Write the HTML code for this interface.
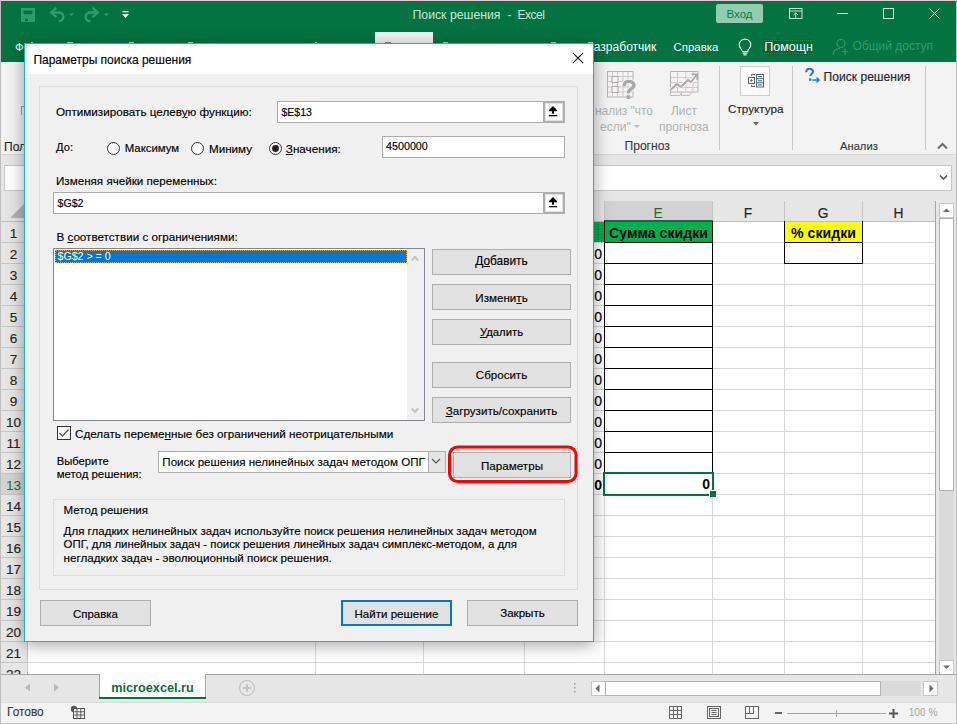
<!DOCTYPE html>
<html><head><meta charset="utf-8"><title>Поиск решения - Excel</title>
<style>
html,body{margin:0;padding:0;}
body{width:957px;height:724px;overflow:hidden;position:relative;font-family:'Liberation Sans', sans-serif;background:#fff;}
div,svg{box-sizing:border-box;}
.k{-webkit-text-stroke:0.15px currentColor;}
u{text-decoration:underline;text-underline-offset:1px;text-decoration-thickness:1px;}
</style></head><body>
<div style="position:absolute;left:0px;top:0px;width:957px;height:62px;background:#027341;"></div>
<div style="position:absolute;left:0px;top:0px;width:957px;height:1px;background:#d5cfd2;"></div>
<div style="position:absolute;left:0px;top:0px;width:1px;height:724px;background:#bdbdbd;"></div>
<div style="position:absolute;left:956px;top:0px;width:1px;height:724px;background:#bdbdbd;"></div>
<svg style="position:absolute;left:20px;top:7px;" width="16" height="16" viewBox="0 0 16 16"><rect x="2.3" y="2.3" width="11.4" height="11.4" fill="none" stroke="#2b9f6b" stroke-width="2.6"/><rect x="2" y="7.3" width="12" height="3" fill="#2b9f6b"/><rect x="3.5" y="10" width="9" height="4" fill="#2b9f6b"/><rect x="5" y="11.7" width="3" height="2.4" fill="#027341"/></svg>
<svg style="position:absolute;left:48px;top:6px;" width="30" height="17" viewBox="0 0 30 17"><path d="M8.5 1.8 L3.2 6.5 L8.5 11.2 M3.5 6.5 H10.5 C13.6 6.5 15.3 8.5 15.3 11 C15.3 13.3 13.6 15 10.5 15.3" fill="none" stroke="#2b9f6b" stroke-width="2.3"/><path d="M21 7.2 h5 l-2.5 2.8z" fill="#2b9f6b"/></svg>
<svg style="position:absolute;left:83px;top:6px;" width="30" height="17" viewBox="0 0 30 17"><path d="M9.5 1.8 L14.8 6.5 L9.5 11.2 M14.5 6.5 H7.5 C4.4 6.5 2.7 8.5 2.7 11 C2.7 13.3 4.4 15 7.5 15.3" fill="none" stroke="#2b9f6b" stroke-width="2.3"/><path d="M21 7.2 h5 l-2.5 2.8z" fill="#2b9f6b"/></svg>
<svg style="position:absolute;left:122px;top:11px;" width="8" height="9" viewBox="0 0 8 9"><rect x="0.5" y="0" width="6" height="1.3" fill="#fff"/><path d="M0 3 h7 l-3.5 4z" fill="#fff"/></svg>
<div style="position:absolute;left:412.5px;top:8.61px;font-size:12.27px;line-height:12.27px;color:#cfe6d8;font-weight:400;white-space:pre;">Поиск решения</div>
<div style="position:absolute;left:507.5px;top:8.84px;font-size:12px;line-height:12px;color:#cfe6d8;font-weight:400;white-space:pre;">-</div>
<div style="position:absolute;left:517.5px;top:8.84px;font-size:12px;line-height:12px;color:#cfe6d8;font-weight:400;white-space:pre;letter-spacing:-0.5px;">Excel</div>
<div style="position:absolute;left:716px;top:4px;width:47px;height:19px;background:#92cdb0;border-radius:2px;"></div>
<div style="position:absolute;left:716px;top:9.27px;width:47px;text-align:center;font-size:11.49px;line-height:11.49px;color:#0a7a40;font-weight:400;white-space:pre;">Вход</div>
<svg style="position:absolute;left:788px;top:7px;" width="15" height="12" viewBox="0 0 15 12"><rect x="1.5" y="1.5" width="12.5" height="10" fill="none" stroke="#c8e4d4" stroke-width="1"/><line x1="1.5" y1="4" x2="14" y2="4" stroke="#c8e4d4"/><path d="M5.5 8 L7.75 5.8 L10 8 M7.75 6 V11.5" stroke="#c8e4d4" fill="none"/></svg>
<div style="position:absolute;left:837px;top:13px;width:11px;height:1px;background:#d3e8db;"></div>
<div style="position:absolute;left:883px;top:8px;width:11px;height:11px;border:1px solid #d3e8db;"></div>
<svg style="position:absolute;left:929px;top:8px;" width="11" height="11" viewBox="0 0 11 11"><path d="M0.5 0.5 L10.5 10.5 M10.5 0.5 L0.5 10.5" stroke="#d3e8db" stroke-width="1"/></svg>
<div style="position:absolute;left:15px;top:41.67px;font-size:11.38px;line-height:11.38px;color:#fff;font-weight:400;white-space:pre;">Файл</div>
<div style="position:absolute;left:375px;top:32px;width:58px;height:30px;background:#f3f3f3;"></div>
<div style="position:absolute;left:31px;top:42px;width:2px;height:1px;background:#9cc7ae;"></div>
<div style="position:absolute;left:67px;top:42px;width:6px;height:1px;background:#b9d9c6;"></div>
<div style="position:absolute;left:129px;top:42px;width:5px;height:1px;background:#b9d9c6;"></div>
<div style="position:absolute;left:188px;top:42px;width:5px;height:1px;background:#b9d9c6;"></div>
<div style="position:absolute;left:315px;top:42px;width:2px;height:1px;background:#9cc7ae;"></div>
<div style="position:absolute;left:385px;top:42px;width:6px;height:1px;background:#8a8a8a;"></div>
<div style="position:absolute;left:443px;top:42px;width:5px;height:1px;background:#b9d9c6;"></div>
<div style="position:absolute;left:551px;top:42px;width:5px;height:1px;background:#b9d9c6;"></div>
<div style="position:absolute;left:588px;top:42px;width:5px;height:1px;background:#b9d9c6;"></div>
<div style="position:absolute;left:593.8px;top:41.11px;font-size:12.04px;line-height:12.04px;color:#fff;font-weight:400;white-space:pre;">азработчик</div>
<div style="position:absolute;left:673.5px;top:41.62px;font-size:11.44px;line-height:11.44px;color:#fff;font-weight:400;white-space:pre;">Справка</div>
<svg style="position:absolute;left:738px;top:38px;" width="14" height="18" viewBox="0 0 14 18"><path d="M7 1.2 C3.5 1.2 1.2 3.8 1.2 6.6 C1.2 9 2.6 10.3 3.6 11.6 C4.2 12.4 4.3 13 4.3 13.6 H9.7 C9.7 13 9.8 12.4 10.4 11.6 C11.4 10.3 12.8 9 12.8 6.6 C12.8 3.8 10.5 1.2 7 1.2 Z" fill="none" stroke="#fff" stroke-width="1.2"/><line x1="4.6" y1="15.2" x2="9.4" y2="15.2" stroke="#fff" stroke-width="1.1"/><line x1="5.4" y1="16.9" x2="8.6" y2="16.9" stroke="#fff" stroke-width="1.1"/></svg>
<div style="position:absolute;left:763px;top:39px;width:50px;height:16px;background:#066838;"></div>
<div style="position:absolute;left:764px;top:40px;width:49px;height:1px;background:repeating-linear-gradient(90deg,#1f9a45 0 1px,transparent 1px 2px);opacity:.8;"></div>
<div style="position:absolute;left:764px;top:53px;width:49px;height:1px;background:repeating-linear-gradient(90deg,#1f9a45 0 1px,transparent 1px 2px);opacity:.8;"></div>
<div style="position:absolute;left:764.3px;top:40.72px;font-size:12.5px;line-height:12.5px;color:#fff;font-weight:400;white-space:pre;">Помощн</div>
<svg style="position:absolute;left:832px;top:38px;" width="18" height="18" viewBox="0 0 18 18"><circle cx="9" cy="5.5" r="4" fill="none" stroke="#2e9f6e" stroke-width="1.1"/><path d="M1 17 C1.5 12.5 4.5 10.5 8 10.5" fill="none" stroke="#2e9f6e" stroke-width="1.1"/><path d="M13 10.5 V17 M9.8 13.7 H16.2" stroke="#2e9f6e" stroke-width="1.1"/></svg>
<div style="position:absolute;left:852.6px;top:40.87px;font-size:11.97px;line-height:11.97px;color:#2e9f6e;font-weight:400;white-space:pre;">Общий доступ</div>
<div style="position:absolute;left:1px;top:62px;width:955px;height:92px;background:#f3f3f3;"></div>
<div style="position:absolute;left:1px;top:154px;width:955px;height:1px;background:#d6d6d6;"></div>
<div class="k" style="position:absolute;left:4px;top:140.84px;font-size:12px;line-height:12px;color:#262626;font-weight:400;white-space:pre;">Пол</div>
<div style="position:absolute;left:21px;top:106px;width:1px;height:9px;background:#a0a0a0;"></div>
<div style="position:absolute;left:21px;top:106px;width:3px;height:1px;background:#a0a0a0;"></div>
<svg style="position:absolute;left:606px;top:70px;" width="32" height="31" viewBox="0 0 32 31"><rect x="1.5" y="1.5" width="25.5" height="25.5" fill="#f8f2f5" stroke="#b4b4b4"/>
<g stroke="#cbcbcb" stroke-width="1"><line x1="6.5" y1="1.5" x2="6.5" y2="27"/><line x1="11.5" y1="1.5" x2="11.5" y2="27"/><line x1="17" y1="1.5" x2="17" y2="27"/><line x1="22" y1="1.5" x2="22" y2="27"/>
<line x1="1.5" y1="6.5" x2="27" y2="6.5"/><line x1="1.5" y1="11.5" x2="27" y2="11.5"/><line x1="1.5" y1="17" x2="27" y2="17"/><line x1="1.5" y1="22" x2="27" y2="22"/></g>
<rect x="6" y="6.5" width="6" height="6" fill="#f8f2f5" stroke="#a8a8a8"/><rect x="6" y="16.5" width="6" height="6" fill="#f8f2f5" stroke="#a8a8a8"/>
<path d="M18 16.2 C18 12.6 20.4 11.4 23 11.4 C25.9 11.4 28 13.2 28 15.6 C28 18.6 22.3 18.8 22.3 23.2" fill="none" stroke="#f3f3f3" stroke-width="5.5"/>
<path d="M18 16.2 C18 12.6 20.4 11.4 23 11.4 C25.9 11.4 28 13.2 28 15.6 C28 18.6 22.3 18.8 22.3 23.2" fill="none" stroke="#a8a8a8" stroke-width="3.4"/>
<rect x="20.6" y="25.4" width="3.6" height="3.6" fill="#a8a8a8"/></svg>
<div style="position:absolute;left:595px;top:105.91px;font-size:11.92px;line-height:11.92px;color:#b1b1b1;font-weight:400;white-space:pre;">нализ "что</div>
<div style="position:absolute;left:600px;top:120.84px;font-size:12px;line-height:12px;color:#b1b1b1;font-weight:400;white-space:pre;">если"</div>
<svg style="position:absolute;left:634px;top:125px;" width="7" height="4" viewBox="0 0 7 4"><path d="M0 0 h6 l-3 3z" fill="#b9b9b9"/></svg>
<svg style="position:absolute;left:669px;top:70px;" width="31" height="27" viewBox="0 0 31 27"><rect x="1.5" y="1.5" width="27.5" height="20.5" fill="#f8f2f5" stroke="#b4b4b4"/>
<g stroke="#cbcbcb" stroke-width="1"><line x1="8.5" y1="1.5" x2="8.5" y2="22"/><line x1="16.8" y1="1.5" x2="16.8" y2="22"/><line x1="24" y1="1.5" x2="24" y2="22"/>
<line x1="1.5" y1="7.5" x2="29" y2="7.5"/><line x1="1.5" y1="12.5" x2="29" y2="12.5"/><line x1="1.5" y1="17.5" x2="29" y2="17.5"/></g>
<path d="M1.5 22 V25.5 H11 L12.5 22.5 M12.5 22.5 V25.5 H20.5 L23 22" fill="none" stroke="#bdbdbd"/>
<path d="M2 19.5 L8 14 L12 17 L19 10 L22 12 L27.5 5" fill="none" stroke="#f8f2f5" stroke-width="4"/>
<path d="M2 19.5 L8 14 L12 17 L19 10 L22 12 L27.5 5" fill="none" stroke="#a8a8a8" stroke-width="1.8"/>
<path d="M22.5 4.2 H28.2 V9.8" fill="none" stroke="#a8a8a8" stroke-width="1.6"/></svg>
<div style="position:absolute;left:671px;top:105.88px;font-size:11.96px;line-height:11.96px;color:#b1b1b1;font-weight:400;white-space:pre;">Лист</div>
<div style="position:absolute;left:659px;top:120.8px;font-size:12.05px;line-height:12.05px;color:#b1b1b1;font-weight:400;white-space:pre;">прогноза</div>
<div class="k" style="position:absolute;left:624.5px;top:139.78px;font-size:12.07px;line-height:12.07px;color:#3b3b3b;font-weight:400;white-space:pre;">Прогноз</div>
<div style="position:absolute;left:719px;top:66px;width:1px;height:84px;background:#c8c8c8;"></div>
<div style="position:absolute;left:792px;top:66px;width:1px;height:84px;background:#c8c8c8;"></div>
<div style="position:absolute;left:925px;top:66px;width:1px;height:84px;background:#c8c8c8;"></div>
<div style="position:absolute;left:740px;top:66px;width:30px;height:30px;background:#fbfbfb;border:1px solid #cdcdcd;"></div>
<svg style="position:absolute;left:747px;top:73px;" width="18" height="15" viewBox="0 0 18 15"><g fill="none" stroke="#666" stroke-width="1">
<rect x="1.5" y="4.5" width="6" height="6"/><path d="M3.2 7.5 H5.8 M4.5 6.2 V8.8"/>
<path d="M8 1.5 H4.5 V3.2 M4.5 11.8 V13.5 H8"/>
<rect x="9.5" y="1.5" width="7" height="12.5"/><line x1="9.5" y1="5.7" x2="16.5" y2="5.7"/><line x1="9.5" y1="9.8" x2="16.5" y2="9.8"/>
</g>
<g stroke="#1e88d0" stroke-width="1.2"><line x1="11" y1="3.6" x2="15" y2="3.6"/><line x1="11" y1="7.75" x2="15" y2="7.75"/><line x1="11" y1="11.9" x2="15" y2="11.9"/></g></svg>
<div class="k" style="position:absolute;left:728px;top:103.11px;font-size:11.68px;line-height:11.68px;color:#262626;font-weight:400;white-space:pre;">Структура</div>
<svg style="position:absolute;left:753px;top:122px;" width="7" height="4" viewBox="0 0 7 4"><path d="M0 0 h6 l-3 3.5z" fill="#666"/></svg>
<svg style="position:absolute;left:804px;top:68px;" width="17" height="15" viewBox="0 0 17 15"><path d="M2.2 4.2 C2.2 1.6 4 0.8 5.6 0.8 C7.4 0.8 9 1.8 9 3.6 C9 5.6 6.6 6 6.3 8.2" fill="none" stroke="#1e7cc8" stroke-width="2"/>
<rect x="5" y="10.4" width="2.4" height="2.4" fill="#1e7cc8"/>
<path d="M8.5 12 H15 M12.5 9.5 L15.2 12 L12.5 14.5" fill="none" stroke="#1e7cc8" stroke-width="1.3"/></svg>
<div class="k" style="position:absolute;left:823.6px;top:70.77px;font-size:12.09px;line-height:12.09px;color:#262626;font-weight:400;white-space:pre;">Поиск решения</div>
<div class="k" style="position:absolute;left:840px;top:140.52px;font-size:11.2px;line-height:11.2px;color:#3b3b3b;font-weight:400;white-space:pre;">Анализ</div>
<svg style="position:absolute;left:937px;top:142px;" width="11" height="8" viewBox="0 0 11 8"><path d="M1 6.5 L5.5 2 L10 6.5" fill="none" stroke="#6b6b6b" stroke-width="2"/></svg>
<div style="position:absolute;left:1px;top:155px;width:955px;height:46px;background:#e6e6e6;"></div>
<div style="position:absolute;left:4px;top:165px;width:120px;height:26px;background:#fff;border:1px solid #c6c6c6;"></div>
<div style="position:absolute;left:560px;top:165px;width:392px;height:26px;background:#fff;border:1px solid #c6c6c6;"></div>
<svg style="position:absolute;left:939px;top:174px;" width="9" height="7" viewBox="0 0 9 7"><path d="M1 1.5 L4.5 5 L8 1.5" fill="none" stroke="#555" stroke-width="1.6"/></svg>
<div style="position:absolute;left:1px;top:201px;width:935px;height:20px;background:#e6e6e6;"></div>
<svg style="position:absolute;left:10px;top:204px;" width="15" height="15" viewBox="0 0 15 15"><path d="M14 0 V14 H0 Z" fill="#b4b4b4"/></svg>
<div style="position:absolute;left:1px;top:221px;width:27px;height:453px;background:#e6e6e6;"></div>
<div style="position:absolute;left:27px;top:201px;width:1px;height:473px;background:#c6c6c6;"></div>
<div style="position:absolute;left:1px;top:221px;width:935px;height:1px;background:#bdbdbd;"></div>
<div style="position:absolute;left:28px;top:222px;width:907px;height:452px;background:#fff;"></div>
<div style="position:absolute;left:28px;top:242px;width:907px;height:1px;background:#d9d9d9;"></div>
<div style="position:absolute;left:1px;top:242px;width:27px;height:1px;background:#c6c6c6;"></div>
<div style="position:absolute;left:28px;top:263px;width:907px;height:1px;background:#d9d9d9;"></div>
<div style="position:absolute;left:1px;top:263px;width:27px;height:1px;background:#c6c6c6;"></div>
<div style="position:absolute;left:28px;top:284px;width:907px;height:1px;background:#d9d9d9;"></div>
<div style="position:absolute;left:1px;top:284px;width:27px;height:1px;background:#c6c6c6;"></div>
<div style="position:absolute;left:28px;top:305px;width:907px;height:1px;background:#d9d9d9;"></div>
<div style="position:absolute;left:1px;top:305px;width:27px;height:1px;background:#c6c6c6;"></div>
<div style="position:absolute;left:28px;top:326px;width:907px;height:1px;background:#d9d9d9;"></div>
<div style="position:absolute;left:1px;top:326px;width:27px;height:1px;background:#c6c6c6;"></div>
<div style="position:absolute;left:28px;top:347px;width:907px;height:1px;background:#d9d9d9;"></div>
<div style="position:absolute;left:1px;top:347px;width:27px;height:1px;background:#c6c6c6;"></div>
<div style="position:absolute;left:28px;top:368px;width:907px;height:1px;background:#d9d9d9;"></div>
<div style="position:absolute;left:1px;top:368px;width:27px;height:1px;background:#c6c6c6;"></div>
<div style="position:absolute;left:28px;top:389px;width:907px;height:1px;background:#d9d9d9;"></div>
<div style="position:absolute;left:1px;top:389px;width:27px;height:1px;background:#c6c6c6;"></div>
<div style="position:absolute;left:28px;top:410px;width:907px;height:1px;background:#d9d9d9;"></div>
<div style="position:absolute;left:1px;top:410px;width:27px;height:1px;background:#c6c6c6;"></div>
<div style="position:absolute;left:28px;top:431px;width:907px;height:1px;background:#d9d9d9;"></div>
<div style="position:absolute;left:1px;top:431px;width:27px;height:1px;background:#c6c6c6;"></div>
<div style="position:absolute;left:28px;top:452px;width:907px;height:1px;background:#d9d9d9;"></div>
<div style="position:absolute;left:1px;top:452px;width:27px;height:1px;background:#c6c6c6;"></div>
<div style="position:absolute;left:28px;top:473px;width:907px;height:1px;background:#d9d9d9;"></div>
<div style="position:absolute;left:1px;top:473px;width:27px;height:1px;background:#c6c6c6;"></div>
<div style="position:absolute;left:28px;top:494px;width:907px;height:1px;background:#d9d9d9;"></div>
<div style="position:absolute;left:1px;top:494px;width:27px;height:1px;background:#c6c6c6;"></div>
<div style="position:absolute;left:28px;top:515px;width:907px;height:1px;background:#d9d9d9;"></div>
<div style="position:absolute;left:1px;top:515px;width:27px;height:1px;background:#c6c6c6;"></div>
<div style="position:absolute;left:28px;top:536px;width:907px;height:1px;background:#d9d9d9;"></div>
<div style="position:absolute;left:1px;top:536px;width:27px;height:1px;background:#c6c6c6;"></div>
<div style="position:absolute;left:28px;top:557px;width:907px;height:1px;background:#d9d9d9;"></div>
<div style="position:absolute;left:1px;top:557px;width:27px;height:1px;background:#c6c6c6;"></div>
<div style="position:absolute;left:28px;top:578px;width:907px;height:1px;background:#d9d9d9;"></div>
<div style="position:absolute;left:1px;top:578px;width:27px;height:1px;background:#c6c6c6;"></div>
<div style="position:absolute;left:28px;top:599px;width:907px;height:1px;background:#d9d9d9;"></div>
<div style="position:absolute;left:1px;top:599px;width:27px;height:1px;background:#c6c6c6;"></div>
<div style="position:absolute;left:28px;top:620px;width:907px;height:1px;background:#d9d9d9;"></div>
<div style="position:absolute;left:1px;top:620px;width:27px;height:1px;background:#c6c6c6;"></div>
<div style="position:absolute;left:28px;top:641px;width:907px;height:1px;background:#d9d9d9;"></div>
<div style="position:absolute;left:1px;top:641px;width:27px;height:1px;background:#c6c6c6;"></div>
<div style="position:absolute;left:28px;top:662px;width:907px;height:1px;background:#d9d9d9;"></div>
<div style="position:absolute;left:1px;top:662px;width:27px;height:1px;background:#c6c6c6;"></div>
<div style="position:absolute;left:315px;top:222px;width:1px;height:452px;background:#d9d9d9;"></div>
<div style="position:absolute;left:315px;top:201px;width:1px;height:20px;background:#c6c6c6;"></div>
<div style="position:absolute;left:423px;top:222px;width:1px;height:452px;background:#d9d9d9;"></div>
<div style="position:absolute;left:423px;top:201px;width:1px;height:20px;background:#c6c6c6;"></div>
<div style="position:absolute;left:524px;top:222px;width:1px;height:452px;background:#d9d9d9;"></div>
<div style="position:absolute;left:524px;top:201px;width:1px;height:20px;background:#c6c6c6;"></div>
<div style="position:absolute;left:604px;top:222px;width:1px;height:452px;background:#d9d9d9;"></div>
<div style="position:absolute;left:604px;top:201px;width:1px;height:20px;background:#c6c6c6;"></div>
<div style="position:absolute;left:712px;top:222px;width:1px;height:452px;background:#d9d9d9;"></div>
<div style="position:absolute;left:712px;top:201px;width:1px;height:20px;background:#c6c6c6;"></div>
<div style="position:absolute;left:784px;top:222px;width:1px;height:452px;background:#d9d9d9;"></div>
<div style="position:absolute;left:784px;top:201px;width:1px;height:20px;background:#c6c6c6;"></div>
<div style="position:absolute;left:862px;top:222px;width:1px;height:452px;background:#d9d9d9;"></div>
<div style="position:absolute;left:862px;top:201px;width:1px;height:20px;background:#c6c6c6;"></div>
<div class="k" style="position:absolute;left:0px;top:227.19px;width:27px;text-align:center;font-size:13.6px;line-height:13.6px;color:#262626;font-weight:400;white-space:pre;">1</div>
<div class="k" style="position:absolute;left:0px;top:248.19px;width:27px;text-align:center;font-size:13.6px;line-height:13.6px;color:#262626;font-weight:400;white-space:pre;">2</div>
<div class="k" style="position:absolute;left:0px;top:269.19px;width:27px;text-align:center;font-size:13.6px;line-height:13.6px;color:#262626;font-weight:400;white-space:pre;">3</div>
<div class="k" style="position:absolute;left:0px;top:290.19px;width:27px;text-align:center;font-size:13.6px;line-height:13.6px;color:#262626;font-weight:400;white-space:pre;">4</div>
<div class="k" style="position:absolute;left:0px;top:311.19px;width:27px;text-align:center;font-size:13.6px;line-height:13.6px;color:#262626;font-weight:400;white-space:pre;">5</div>
<div class="k" style="position:absolute;left:0px;top:332.19px;width:27px;text-align:center;font-size:13.6px;line-height:13.6px;color:#262626;font-weight:400;white-space:pre;">6</div>
<div class="k" style="position:absolute;left:0px;top:353.19px;width:27px;text-align:center;font-size:13.6px;line-height:13.6px;color:#262626;font-weight:400;white-space:pre;">7</div>
<div class="k" style="position:absolute;left:0px;top:374.19px;width:27px;text-align:center;font-size:13.6px;line-height:13.6px;color:#262626;font-weight:400;white-space:pre;">8</div>
<div class="k" style="position:absolute;left:0px;top:395.19px;width:27px;text-align:center;font-size:13.6px;line-height:13.6px;color:#262626;font-weight:400;white-space:pre;">9</div>
<div class="k" style="position:absolute;left:0px;top:416.19px;width:27px;text-align:center;font-size:13.6px;line-height:13.6px;color:#262626;font-weight:400;white-space:pre;">10</div>
<div class="k" style="position:absolute;left:0px;top:437.19px;width:27px;text-align:center;font-size:13.6px;line-height:13.6px;color:#262626;font-weight:400;white-space:pre;">11</div>
<div class="k" style="position:absolute;left:0px;top:458.19px;width:27px;text-align:center;font-size:13.6px;line-height:13.6px;color:#262626;font-weight:400;white-space:pre;">12</div>
<div style="position:absolute;left:1px;top:474px;width:26px;height:20px;background:#d3d3d3;"></div>
<div style="position:absolute;left:0px;top:479.19px;width:27px;text-align:center;font-size:13.6px;line-height:13.6px;color:#1e6b41;font-weight:400;white-space:pre;">13</div>
<div class="k" style="position:absolute;left:0px;top:500.19px;width:27px;text-align:center;font-size:13.6px;line-height:13.6px;color:#262626;font-weight:400;white-space:pre;">14</div>
<div class="k" style="position:absolute;left:0px;top:521.19px;width:27px;text-align:center;font-size:13.6px;line-height:13.6px;color:#262626;font-weight:400;white-space:pre;">15</div>
<div class="k" style="position:absolute;left:0px;top:542.19px;width:27px;text-align:center;font-size:13.6px;line-height:13.6px;color:#262626;font-weight:400;white-space:pre;">16</div>
<div class="k" style="position:absolute;left:0px;top:563.19px;width:27px;text-align:center;font-size:13.6px;line-height:13.6px;color:#262626;font-weight:400;white-space:pre;">17</div>
<div class="k" style="position:absolute;left:0px;top:584.19px;width:27px;text-align:center;font-size:13.6px;line-height:13.6px;color:#262626;font-weight:400;white-space:pre;">18</div>
<div class="k" style="position:absolute;left:0px;top:605.19px;width:27px;text-align:center;font-size:13.6px;line-height:13.6px;color:#262626;font-weight:400;white-space:pre;">19</div>
<div class="k" style="position:absolute;left:0px;top:626.19px;width:27px;text-align:center;font-size:13.6px;line-height:13.6px;color:#262626;font-weight:400;white-space:pre;">20</div>
<div class="k" style="position:absolute;left:0px;top:647.19px;width:27px;text-align:center;font-size:13.6px;line-height:13.6px;color:#262626;font-weight:400;white-space:pre;">21</div>
<div class="k" style="position:absolute;left:0px;top:668.19px;width:27px;text-align:center;font-size:13.6px;line-height:13.6px;color:#262626;font-weight:400;white-space:pre;">22</div>
<div class="k" style="position:absolute;left:524px;top:206.62px;width:80px;text-align:center;font-size:13.8px;line-height:13.8px;color:#262626;font-weight:400;white-space:pre;">D</div>
<div style="position:absolute;left:605px;top:201px;width:107px;height:20px;background:#d2d2d2;"></div>
<div style="position:absolute;left:604px;top:220px;width:109px;height:2px;background:#027341;"></div>
<div style="position:absolute;left:604px;top:206.62px;width:108px;text-align:center;font-size:13.8px;line-height:13.8px;color:#1e6b41;font-weight:400;white-space:pre;">E</div>
<div class="k" style="position:absolute;left:712px;top:206.62px;width:72px;text-align:center;font-size:13.8px;line-height:13.8px;color:#262626;font-weight:400;white-space:pre;">F</div>
<div class="k" style="position:absolute;left:784px;top:206.62px;width:78px;text-align:center;font-size:13.8px;line-height:13.8px;color:#262626;font-weight:400;white-space:pre;">G</div>
<div class="k" style="position:absolute;left:862px;top:206.62px;width:73px;text-align:center;font-size:13.8px;line-height:13.8px;color:#262626;font-weight:400;white-space:pre;">H</div>
<div style="position:absolute;left:524px;top:222px;width:81px;height:20px;background:#00b050;"></div>
<div style="position:absolute;left:605px;top:222px;width:107px;height:20px;background:#00b050;"></div>
<div style="position:absolute;left:605px;top:226.01px;width:107px;text-align:center;font-size:14.17px;line-height:14.17px;color:#000;font-weight:700;white-space:pre;">Сумма скидки</div>
<svg style="position:absolute;left:594px;top:222px;" width="10" height="20" viewBox="0 0 10 20"><rect x="3" y="2.0" width="2" height="1" fill="#1f7a44"/><rect x="3" y="4.5" width="2" height="1" fill="#1f7a44"/><rect x="3" y="7.0" width="2" height="1" fill="#1f7a44"/><rect x="3" y="9.5" width="2" height="1" fill="#1f7a44"/><rect x="3" y="12.0" width="2" height="1" fill="#1f7a44"/><rect x="3" y="14.5" width="2" height="1" fill="#1f7a44"/><rect x="3" y="17.0" width="2" height="1" fill="#1f7a44"/><rect x="7" y="3" width="1.5" height="1" fill="#1f7a44"/><rect x="7" y="6" width="1.5" height="1" fill="#1f7a44"/><rect x="7" y="9" width="1.5" height="1" fill="#1f7a44"/><rect x="7" y="12" width="1.5" height="1" fill="#1f7a44"/><rect x="7" y="15" width="1.5" height="1" fill="#1f7a44"/><rect x="7" y="18" width="1.5" height="1" fill="#1f7a44"/></svg>
<div style="position:absolute;left:784px;top:222px;width:78px;height:20px;background:#ffff00;"></div>
<div style="position:absolute;left:784px;top:226.01px;width:79px;text-align:center;font-size:14.16px;line-height:14.16px;color:#000;font-weight:700;white-space:pre;">% скидки</div>
<div style="position:absolute;left:604px;top:221px;width:1px;height:252px;background:#000;"></div>
<div style="position:absolute;left:712px;top:221px;width:1px;height:252px;background:#000;"></div>
<div style="position:absolute;left:604px;top:242px;width:109px;height:1px;background:#000;"></div>
<div style="position:absolute;left:604px;top:263px;width:109px;height:1px;background:#000;"></div>
<div style="position:absolute;left:604px;top:284px;width:109px;height:1px;background:#000;"></div>
<div style="position:absolute;left:604px;top:305px;width:109px;height:1px;background:#000;"></div>
<div style="position:absolute;left:604px;top:326px;width:109px;height:1px;background:#000;"></div>
<div style="position:absolute;left:604px;top:347px;width:109px;height:1px;background:#000;"></div>
<div style="position:absolute;left:604px;top:368px;width:109px;height:1px;background:#000;"></div>
<div style="position:absolute;left:604px;top:389px;width:109px;height:1px;background:#000;"></div>
<div style="position:absolute;left:604px;top:410px;width:109px;height:1px;background:#000;"></div>
<div style="position:absolute;left:604px;top:431px;width:109px;height:1px;background:#000;"></div>
<div style="position:absolute;left:604px;top:452px;width:109px;height:1px;background:#000;"></div>
<div style="position:absolute;left:604px;top:473px;width:109px;height:1px;background:#000;"></div>
<div style="position:absolute;left:784px;top:221px;width:1px;height:43px;background:#000;"></div>
<div style="position:absolute;left:862px;top:221px;width:1px;height:43px;background:#000;"></div>
<div style="position:absolute;left:784px;top:242px;width:79px;height:1px;background:#000;"></div>
<div style="position:absolute;left:784px;top:263px;width:79px;height:1px;background:#000;"></div>
<div class="k" style="position:absolute;left:562px;top:247.45px;width:40px;text-align:right;font-size:14px;line-height:14px;color:#000;font-weight:400;white-space:pre;">0</div>
<div class="k" style="position:absolute;left:562px;top:268.45px;width:40px;text-align:right;font-size:14px;line-height:14px;color:#000;font-weight:400;white-space:pre;">0</div>
<div class="k" style="position:absolute;left:562px;top:289.45px;width:40px;text-align:right;font-size:14px;line-height:14px;color:#000;font-weight:400;white-space:pre;">0</div>
<div class="k" style="position:absolute;left:562px;top:310.45px;width:40px;text-align:right;font-size:14px;line-height:14px;color:#000;font-weight:400;white-space:pre;">0</div>
<div class="k" style="position:absolute;left:562px;top:331.45px;width:40px;text-align:right;font-size:14px;line-height:14px;color:#000;font-weight:400;white-space:pre;">0</div>
<div class="k" style="position:absolute;left:562px;top:352.45px;width:40px;text-align:right;font-size:14px;line-height:14px;color:#000;font-weight:400;white-space:pre;">0</div>
<div class="k" style="position:absolute;left:562px;top:373.45px;width:40px;text-align:right;font-size:14px;line-height:14px;color:#000;font-weight:400;white-space:pre;">0</div>
<div class="k" style="position:absolute;left:562px;top:394.45px;width:40px;text-align:right;font-size:14px;line-height:14px;color:#000;font-weight:400;white-space:pre;">0</div>
<div class="k" style="position:absolute;left:562px;top:415.45px;width:40px;text-align:right;font-size:14px;line-height:14px;color:#000;font-weight:400;white-space:pre;">0</div>
<div class="k" style="position:absolute;left:562px;top:436.45px;width:40px;text-align:right;font-size:14px;line-height:14px;color:#000;font-weight:400;white-space:pre;">0</div>
<div class="k" style="position:absolute;left:562px;top:457.45px;width:40px;text-align:right;font-size:14px;line-height:14px;color:#000;font-weight:400;white-space:pre;">0</div>
<div style="position:absolute;left:562px;top:478.45px;width:40px;text-align:right;font-size:14px;line-height:14px;color:#000;font-weight:700;white-space:pre;">0</div>
<div style="position:absolute;left:603px;top:472px;width:111px;height:24px;border:2px solid #027341;"></div>
<div style="position:absolute;left:709px;top:490px;width:7px;height:7px;background:#027341;border-left:1px solid #fff;border-top:1px solid #fff;"></div>
<div style="position:absolute;left:670px;top:477.15px;width:40px;text-align:right;font-size:14px;line-height:14px;color:#000;font-weight:700;white-space:pre;">0</div>
<div style="position:absolute;left:935px;top:201px;width:1px;height:474px;background:#a6a6a6;"></div>
<div style="position:absolute;left:936px;top:201px;width:20px;height:474px;background:#e6e6e6;"></div>
<div style="position:absolute;left:939px;top:218px;width:15px;height:443px;background:#dadada;"></div>
<div style="position:absolute;left:939px;top:203px;width:15px;height:15px;background:#fff;border:1px solid #c6c6c6;"></div>
<svg style="position:absolute;left:943px;top:208px;" width="8" height="5" viewBox="0 0 8 5"><path d="M0 4 L3.5 0.5 L7 4z" fill="#6b6b6b"/></svg>
<div style="position:absolute;left:939px;top:218px;width:15px;height:273px;background:#fff;border:1px solid #b4b4b4;"></div>
<div style="position:absolute;left:939px;top:660px;width:15px;height:15px;background:#fff;border:1px solid #c6c6c6;"></div>
<svg style="position:absolute;left:943px;top:665px;" width="8" height="5" viewBox="0 0 8 5"><path d="M0 0.5 L7 0.5 L3.5 4z" fill="#6b6b6b"/></svg>
<div style="position:absolute;left:1px;top:674px;width:955px;height:1px;background:#a6a6a6;"></div>
<div style="position:absolute;left:1px;top:675px;width:955px;height:27px;background:#e6e6e6;"></div>
<svg style="position:absolute;left:24px;top:683px;" width="8" height="9" viewBox="0 0 8 9"><path d="M6 0.5 V8.5 L1 4.5z" fill="#b9b9b9"/></svg>
<svg style="position:absolute;left:53px;top:683px;" width="8" height="9" viewBox="0 0 8 9"><path d="M1 0.5 V8.5 L6 4.5z" fill="#b9b9b9"/></svg>
<div style="position:absolute;left:99px;top:674px;width:107px;height:25px;background:#fff;border-left:1px solid #a6a6a6;border-right:1px solid #a6a6a6;"></div>
<div style="position:absolute;left:99px;top:697px;width:107px;height:2px;background:#027341;"></div>
<div style="position:absolute;left:99px;top:682.06px;width:107px;text-align:center;font-size:12.69px;line-height:12.69px;color:#0f6e3e;font-weight:700;white-space:pre;">microexcel.ru</div>
<svg style="position:absolute;left:238px;top:679px;" width="18" height="18" viewBox="0 0 18 18"><circle cx="9" cy="9" r="7.5" fill="none" stroke="#c2c2c2" stroke-width="1.2"/><path d="M9 5 V13 M5 9 H13" stroke="#bdbdbd" stroke-width="1.5"/></svg>
<svg style="position:absolute;left:573px;top:683px;" width="4" height="11" viewBox="0 0 4 11"><rect x="1" y="0" width="1.5" height="1.5" fill="#9a9a9a"/><rect x="1" y="4" width="1.5" height="1.5" fill="#9a9a9a"/><rect x="1" y="8" width="1.5" height="1.5" fill="#9a9a9a"/></svg>
<div style="position:absolute;left:591px;top:681px;width:330px;height:15px;background:#dadada;"></div>
<div style="position:absolute;left:591px;top:681px;width:15px;height:15px;background:#fff;border:1px solid #c6c6c6;"></div>
<svg style="position:absolute;left:595px;top:684px;" width="6" height="9" viewBox="0 0 6 9"><path d="M4.5 0.5 V8.5 L0.5 4.5z" fill="#6b6b6b"/></svg>
<div style="position:absolute;left:605px;top:681px;width:276px;height:15px;background:#fff;border:1px solid #b4b4b4;"></div>
<div style="position:absolute;left:923px;top:681px;width:15px;height:15px;background:#fff;border:1px solid #c6c6c6;"></div>
<svg style="position:absolute;left:929px;top:684px;" width="6" height="9" viewBox="0 0 6 9"><path d="M0.5 0.5 V8.5 L4.5 4.5z" fill="#6b6b6b"/></svg>
<div style="position:absolute;left:1px;top:702px;width:955px;height:22px;background:#f3f3f3;border-top:1px solid #dadada;border-bottom:1px solid #c6c6c6;"></div>
<div class="k" style="position:absolute;left:7px;top:706.94px;font-size:11.88px;line-height:11.88px;color:#3b3b3b;font-weight:400;white-space:pre;">Готово</div>
<svg style="position:absolute;left:70px;top:705px;" width="15" height="14" viewBox="0 0 15 14"><circle cx="4" cy="4" r="3.2" fill="#555"/><rect x="3.5" y="3.5" width="11" height="10" fill="#fff" stroke="#555"/><path d="M3.5 6.8 H14.5 M3.5 10 H14.5 M7 3.5 V13.5 M10.8 3.5 V13.5" stroke="#555" stroke-width="1"/></svg>
<svg style="position:absolute;left:669px;top:706px;" width="13" height="13" viewBox="0 0 13 13"><rect x="0.5" y="0.5" width="12" height="12" fill="none" stroke="#666"/><path d="M4.5 0.5 V12.5 M8.5 0.5 V12.5 M0.5 4.5 H12.5 M0.5 8.5 H12.5" stroke="#666"/></svg>
<svg style="position:absolute;left:707px;top:706px;" width="14" height="13" viewBox="0 0 14 13"><rect x="0.5" y="0.5" width="13" height="12" fill="none" stroke="#666"/><rect x="2.5" y="2.5" width="9" height="8" fill="none" stroke="#666"/><path d="M4.5 4.5 H9.5 M4.5 6.5 H9.5 M4.5 8.5 H9.5" stroke="#666"/></svg>
<svg style="position:absolute;left:745px;top:706px;" width="14" height="13" viewBox="0 0 14 13"><rect x="0.5" y="0.5" width="13" height="12" fill="none" stroke="#666"/><path d="M4.5 0.5 V7.5 M8.5 0.5 V7.5 M0.5 7.5 H9" fill="none" stroke="#666"/></svg>
<div style="position:absolute;left:775px;top:712px;width:7px;height:2px;background:#666;"></div>
<div style="position:absolute;left:787px;top:713px;width:99px;height:1px;background:#a6a6a6;"></div>
<div style="position:absolute;left:836px;top:710px;width:1px;height:7px;background:#a6a6a6;"></div>
<svg style="position:absolute;left:889px;top:709px;" width="9" height="9" viewBox="0 0 9 9"><path d="M4.5 0 V9 M0 4.5 H9" stroke="#555" stroke-width="2"/></svg>
<div style="position:absolute;left:908.7px;top:708.4px;font-size:10.16px;line-height:10.16px;color:#a6a6a6;font-weight:400;white-space:pre;">100 %</div>
<div style="position:absolute;left:24px;top:43px;width:570px;height:599px;box-shadow:0 3px 16px rgba(0,0,0,0.36);background:#f0f0f0;border:1px solid #14b6c6;"></div>
<div style="position:absolute;left:25px;top:44px;width:568px;height:30px;background:#fff;"></div>
<div class="k" style="position:absolute;left:33.4px;top:53.85px;font-size:11.99px;line-height:11.99px;color:#000;font-weight:400;white-space:pre;">Параметры поиска решения</div>
<svg style="position:absolute;left:572px;top:52px;" width="12" height="12" viewBox="0 0 12 12"><path d="M0.8 0.8 L11.2 11.2 M11.2 0.8 L0.8 11.2" stroke="#111" stroke-width="1.1"/></svg>
<div style="position:absolute;left:39px;top:86px;width:539px;height:504px;border:1px solid #dcdcdc;"></div>
<div class="k" style="position:absolute;left:56px;top:106.1px;font-size:11.69px;line-height:11.69px;color:#000;font-weight:400;white-space:pre;">Оптимизировать целев<u>у</u>ю функцию:</div>
<div style="position:absolute;left:277px;top:101px;width:288px;height:22px;background:#fff;border:1px solid #adadad;"></div>
<div class="k" style="position:absolute;left:281.4px;top:107.07px;font-size:10.55px;line-height:10.55px;color:#000;font-weight:400;white-space:pre;">$E$13</div>
<div style="position:absolute;left:543px;top:101px;width:22px;height:22px;background:#fff;border:2px solid #adadad;box-shadow:inset 0 0 0 1px #e3e3e3;"></div>
<svg style="position:absolute;left:548px;top:105px;" width="11" height="13" viewBox="0 0 11 13"><path d="M5 1 L9.2 5.2 V6.2 H6 V8.7 H4 V6.2 H0.8 V5.2 Z" fill="#000"/><rect x="0.8" y="10" width="8.4" height="1.3" fill="#000"/></svg>
<div class="k" style="position:absolute;left:56px;top:141.54px;font-size:11.17px;line-height:11.17px;color:#000;font-weight:400;white-space:pre;">До:</div>
<svg style="position:absolute;left:106px;top:141px;" width="15" height="15" viewBox="0 0 15 15"><circle cx="7.5" cy="7.5" r="6" fill="#fff" stroke="#333" stroke-width="1"/></svg>
<svg style="position:absolute;left:190px;top:141px;" width="15" height="15" viewBox="0 0 15 15"><circle cx="7.5" cy="7.5" r="6" fill="#fff" stroke="#333" stroke-width="1"/></svg>
<svg style="position:absolute;left:268px;top:141px;" width="15" height="15" viewBox="0 0 15 15"><circle cx="7.5" cy="7.5" r="6" fill="#fff" stroke="#333" stroke-width="1"/><circle cx="7.5" cy="7.5" r="3.4" fill="#222"/></svg>
<div class="k" style="position:absolute;left:124.7px;top:143.35px;font-size:11.4px;line-height:11.4px;color:#000;font-weight:400;white-space:pre;">Максимум</div>
<div class="k" style="position:absolute;left:209px;top:143.16px;font-size:11.62px;line-height:11.62px;color:#000;font-weight:400;white-space:pre;">Миниму</div>
<div class="k" style="position:absolute;left:285.8px;top:143.09px;font-size:11.71px;line-height:11.71px;color:#000;font-weight:400;white-space:pre;"><u>З</u>начения:</div>
<div style="position:absolute;left:382px;top:136px;width:183px;height:22px;background:#fff;border:1px solid #adadad;"></div>
<div class="k" style="position:absolute;left:386px;top:141.41px;font-size:10.74px;line-height:10.74px;color:#000;font-weight:400;white-space:pre;">4500000</div>
<div class="k" style="position:absolute;left:56px;top:174.85px;font-size:11.64px;line-height:11.64px;color:#000;font-weight:400;white-space:pre;">Изменяя ячейки переменных:</div>
<div style="position:absolute;left:53px;top:192px;width:512px;height:22px;background:#fff;border:1px solid #adadad;"></div>
<div class="k" style="position:absolute;left:57.5px;top:197.5px;font-size:10.63px;line-height:10.63px;color:#000;font-weight:400;white-space:pre;">$G$2</div>
<div style="position:absolute;left:543px;top:192px;width:22px;height:22px;background:#fff;border:2px solid #adadad;box-shadow:inset 0 0 0 1px #e3e3e3;"></div>
<svg style="position:absolute;left:548px;top:196px;" width="11" height="13" viewBox="0 0 11 13"><path d="M5 1 L9.2 5.2 V6.2 H6 V8.7 H4 V6.2 H0.8 V5.2 Z" fill="#000"/><rect x="0.8" y="10" width="8.4" height="1.3" fill="#000"/></svg>
<div class="k" style="position:absolute;left:56.4px;top:231.12px;font-size:11.67px;line-height:11.67px;color:#000;font-weight:400;white-space:pre;">В <u>с</u>оответствии с ограничениями:</div>
<div style="position:absolute;left:53px;top:248px;width:372px;height:173px;background:#fff;border:1px solid #828790;"></div>
<div style="position:absolute;left:55px;top:250px;width:352px;height:13px;background:#0078d7;outline:1px dotted #f2a53a;outline-offset:-1px;"></div>
<div style="position:absolute;left:57.6px;top:251.03px;font-size:10.6px;line-height:10.6px;color:#fff;font-weight:400;white-space:pre;">$G$2 &gt; = 0</div>
<div style="position:absolute;left:407px;top:249px;width:17px;height:171px;background:#f0f0f0;"></div>
<svg style="position:absolute;left:411px;top:255px;" width="8" height="7" viewBox="0 0 8 7"><path d="M0.8 5.5 L4 2 L7.2 5.5" fill="none" stroke="#c2c2c2" stroke-width="2"/></svg>
<svg style="position:absolute;left:411px;top:407px;" width="8" height="7" viewBox="0 0 8 7"><path d="M0.8 1.5 L4 5 L7.2 1.5" fill="none" stroke="#c2c2c2" stroke-width="2"/></svg>
<div style="position:absolute;left:432px;top:249px;width:139px;height:26px;background:#e1e1e1;border:1px solid #adadad;"></div>
<div class="k" style="position:absolute;left:432px;top:256.44px;width:139px;text-align:center;font-size:11.88px;line-height:11.88px;color:#000;font-weight:400;white-space:pre;">Д<u>о</u>бавить</div>
<div style="position:absolute;left:432px;top:284px;width:139px;height:26px;background:#e1e1e1;border:1px solid #adadad;"></div>
<div class="k" style="position:absolute;left:432px;top:291.66px;width:139px;text-align:center;font-size:11.62px;line-height:11.62px;color:#000;font-weight:400;white-space:pre;">Измени<u>т</u>ь</div>
<div style="position:absolute;left:432px;top:319px;width:139px;height:26px;background:#e1e1e1;border:1px solid #adadad;"></div>
<div class="k" style="position:absolute;left:432px;top:326.92px;width:139px;text-align:center;font-size:11.32px;line-height:11.32px;color:#000;font-weight:400;white-space:pre;"><u>У</u>далить</div>
<div style="position:absolute;left:432px;top:362px;width:139px;height:26px;background:#e1e1e1;border:1px solid #adadad;"></div>
<div class="k" style="position:absolute;left:432px;top:369.71px;width:139px;text-align:center;font-size:11.57px;line-height:11.57px;color:#000;font-weight:400;white-space:pre;">Сбросить</div>
<div style="position:absolute;left:432px;top:397px;width:139px;height:26px;background:#e1e1e1;border:1px solid #adadad;"></div>
<div class="k" style="position:absolute;left:432px;top:404.66px;width:139px;text-align:center;font-size:11.63px;line-height:11.63px;color:#000;font-weight:400;white-space:pre;"><u>З</u>агрузить/сохранить</div>
<svg style="position:absolute;left:57px;top:426px;" width="15" height="15" viewBox="0 0 15 15"><rect x="0.5" y="0.5" width="13" height="13" fill="#fff" stroke="#333"/><path d="M2.5 7 L5.5 10 L11.5 3.5" fill="none" stroke="#555" stroke-width="1.3"/></svg>
<div class="k" style="position:absolute;left:75px;top:428.1px;font-size:11.7px;line-height:11.7px;color:#000;font-weight:400;white-space:pre;">Сделать переме<u>н</u>ные без ограничений неотрицательными</div>
<div class="k" style="position:absolute;left:56.7px;top:455.97px;font-size:11.26px;line-height:11.26px;color:#000;font-weight:400;white-space:pre;">Выберите</div>
<div class="k" style="position:absolute;left:56.7px;top:469.14px;font-size:11.41px;line-height:11.41px;color:#000;font-weight:400;white-space:pre;">метод решения:</div>
<div style="position:absolute;left:158px;top:451px;width:288px;height:22px;background:#fff;border:1px solid #adadad;"></div>
<div class="k" style="position:absolute;left:162.3px;top:456.28px;font-size:11.6px;line-height:11.6px;color:#000;font-weight:400;white-space:pre;">Поиск решения нелинейных задач методом ОПГ</div>
<div style="position:absolute;left:428px;top:452px;width:17px;height:20px;background:#e5e5e5;border-left:1px solid #adadad;"></div>
<svg style="position:absolute;left:431px;top:458px;" width="10" height="7" viewBox="0 0 10 7"><path d="M1 1 L5 5 L9 1" fill="none" stroke="#555" stroke-width="1.2"/></svg>
<div style="position:absolute;left:453px;top:452px;width:118px;height:26px;background:#e1e1e1;border:1px solid #adadad;"></div>
<div class="k" style="position:absolute;left:453px;top:459.65px;width:118px;text-align:center;font-size:11.64px;line-height:11.64px;color:#000;font-weight:400;white-space:pre;">Параметры</div>
<svg style="position:absolute;left:446px;top:444px;" width="133" height="40" viewBox="0 0 133 40"><rect x="3.5" y="3" width="126.5" height="34.5" rx="8" ry="8" fill="none" stroke="#ff0000" stroke-width="3"/></svg>
<div style="position:absolute;left:53px;top:499px;width:512px;height:77px;border:1px solid #dcdcdc;"></div>
<div class="k" style="position:absolute;left:63.6px;top:505.04px;font-size:11.53px;line-height:11.53px;color:#000;font-weight:400;white-space:pre;">Метод решения</div>
<div class="k" style="position:absolute;left:63.6px;top:526.02px;font-size:11.55px;line-height:11.55px;color:#000;font-weight:400;white-space:pre;">Для гладких нелинейных задач используйте поиск решения нелинейных задач методом</div>
<div class="k" style="position:absolute;left:63.6px;top:539.34px;font-size:11.41px;line-height:11.41px;color:#000;font-weight:400;white-space:pre;">ОПГ, для линейных задач - поиск решения линейных задач симплекс-методом, а для</div>
<div class="k" style="position:absolute;left:63.6px;top:552.12px;font-size:11.67px;line-height:11.67px;color:#000;font-weight:400;white-space:pre;">негладких задач - эволюционный поиск решения.</div>
<div style="position:absolute;left:40px;top:600px;width:111px;height:26px;background:#e1e1e1;border:1px solid #adadad;"></div>
<div class="k" style="position:absolute;left:40px;top:608.58px;width:111px;text-align:center;font-size:11.48px;line-height:11.48px;color:#000;font-weight:400;white-space:pre;">Справка</div>
<div style="position:absolute;left:341px;top:600px;width:111px;height:26px;background:#e1e1e1;border:2px solid #0078d7;"></div>
<div class="k" style="position:absolute;left:341px;top:608.51px;width:111px;text-align:center;font-size:11.56px;line-height:11.56px;color:#000;font-weight:400;white-space:pre;">Найти решение</div>
<div style="position:absolute;left:467px;top:600px;width:111px;height:26px;background:#e1e1e1;border:1px solid #adadad;"></div>
<div class="k" style="position:absolute;left:467px;top:608.49px;width:111px;text-align:center;font-size:11.59px;line-height:11.59px;color:#000;font-weight:400;white-space:pre;">Закрыть</div>
</body></html>
